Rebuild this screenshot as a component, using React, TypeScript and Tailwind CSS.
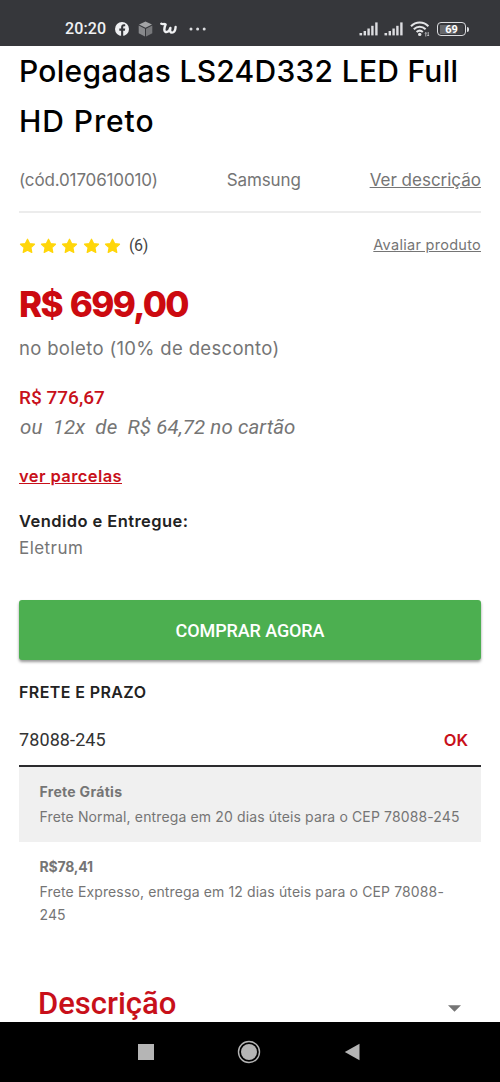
import React from 'react';

const shippingOptions = [
  {
    id: 'gratis',
    price: 'Frete Grátis',
    text: 'Frete Normal, entrega em 20 dias úteis para o CEP 78088-245',
    row: 'h-[75px] bg-[#f0f0f0]',
    priceClass: 'tracking-[0.3px]',
  },
  {
    id: 'expresso',
    price: 'R$78,41',
    text: 'Frete Expresso, entrega em 12 dias úteis para o CEP 78088-245',
    row: 'h-[98px]',
    priceClass: 'tracking-[-0.2px]',
  },
];

const SignalIcon = () => (
  <svg width="20" height="14" viewBox="0 0 20 14" fill="#dcdde0">
    <rect x="0.5" y="11" width="2.6" height="2.4" />
    <rect x="4.6" y="9" width="2.4" height="4.4" />
    <rect x="8.4" y="6.5" width="2.4" height="6.9" />
    <rect x="12.2" y="3.8" width="2.4" height="9.6" />
    <rect x="16.2" y="0.4" width="2.4" height="13" />
  </svg>
);

const StatusBar = () => (
  <header className="flex h-[46px] items-start justify-between bg-[#36373b] pt-[19px] pr-[31px] pl-[65px]">
    <div className="flex h-5 items-center">
      <span className="w-[41px] whitespace-nowrap font-[Roboto] text-[16px] leading-5 font-medium tracking-[0.15px] text-[#f0f1f3]">
        20:20
      </span>
      <svg className="ml-[9px]" width="14" height="14" viewBox="0 0 14 14">
        <circle cx="7" cy="7" r="7" fill="#eeeff1" />
        <path
          d="M6.1 14V8.7H4.3V6.6h1.8V5.3c0-2 1.1-3 2.8-3 .5 0 1 .1 1.3.1v1.8h-.9c-.9 0-1.1.5-1.1 1.1v1.3h2l-.3 2.1H8.2V14z"
          fill="#36373b"
        />
      </svg>
      <svg className="ml-[9px]" width="15" height="16" viewBox="0 0 15 16">
        <path d="M7.5.5 14 3.6 7.5 6.8 1 3.6z" fill="#a3a4a6" />
        <path d="M.7 4.6 7 7.7v7.8L.7 12.2z" fill="#88898c" />
        <path d="M14.3 4.6 8 7.7v7.8l6.3-3.3z" fill="#77787b" />
      </svg>
      {/* Wish */}
      <svg className="ml-[7px]" width="17" height="14" viewBox="0 0 17 14" fill="none">
        <path
          d="M1.3 1.7c1.2 1.1 2.8-.3 4.3.8-.9 2-1.4 3.900-1.2 5.600.3 3 4.700 2.600 6-2.200-.7 3.300-.1 4.700 1.600 4.700 2.300 0 3.400-2.600 3.600-5.600"
          stroke="#f0f1f3"
          strokeWidth="2.4"
          strokeLinecap="round"
          strokeLinejoin="round"
        />
      </svg>
      <svg className="ml-[12px]" width="18" height="4" viewBox="0 0 18 4" fill="#dcdde0">
        <circle cx="2" cy="2" r="1.5" />
        <circle cx="8.6" cy="2" r="1.5" />
        <circle cx="15.2" cy="2" r="1.5" />
      </svg>
    </div>
    <div className="flex h-5 items-center">
      <SignalIcon />
      <div className="ml-[5px] flex">
        <SignalIcon />
      </div>
      <svg className="ml-[6px]" width="21" height="16" viewBox="0 0 21 16" fill="none">
        <path
          d="M1 5.3c4.9-5 12.5-5 17.4 0M3.8 8.3c3.4-3.4 8.4-3.4 11.8 0M6.6 11.1c1.9-1.8 4.3-1.8 6.2 0"
          stroke="#e3e4e6"
          strokeWidth="2"
        />
        <circle cx="9.7" cy="13.4" r="1.7" fill="#e3e4e6" />
        <path d="M15.8 11.5v4M15 12.5l.8-1 .8 1M18.2 11v4M17.4 14l.8 1 .8-1" stroke="#c4c5c8" strokeWidth="0.9" />
      </svg>
      <div className="ml-[6px] flex h-[14px] w-[29px] items-center justify-center rounded-[4px] border-[1.5px] border-[#dcdde0]">
        <div className="flex h-[9px] w-[23px] items-center justify-center bg-linear-to-r from-[#66676a] from-70% to-[#404145] to-70%">
          <span className="font-[Roboto] text-[11px] leading-[9px] font-bold text-white">69</span>
        </div>
      </div>
      <div className="ml-px h-[5px] w-[2px] rounded-r-sm bg-[#dcdde0]" />
    </div>
  </header>
);

const Star = () => (
  <svg width="17" height="16" viewBox="0 0 17 16">
    <path
      d="m8.5 1.2 2.1 4.4 4.9.6-3.6 3.4.9 4.8-4.3-2.3-4.3 2.3.9-4.8L1.5 6.2l4.9-.6z"
      fill="#ffd60a"
      stroke="#ffd60a"
      strokeWidth="1.2"
      strokeLinejoin="round"
    />
  </svg>
);

const ProductInfo = () => (
  <section className="px-[19px]">
    <h1 className="h-[99px] pt-px text-[30px] leading-[49.5px] font-[450] whitespace-nowrap text-black">
      <span className="block tracking-[0.27px]">Polegadas LS24D332 LED Full</span>
      <span className="block tracking-[0.95px]">HD Preto</span>
    </h1>

    <div className="flex h-[68px] items-center justify-between border-b-2 border-[#ececec] pt-[5px] text-[17px] whitespace-nowrap text-[#757575]">
      <span className="tracking-[-0.15px]">(cód.0170610010)</span>
      <span className="tracking-[-0.1px]">Samsung</span>
      <a className="underline">Ver descrição</a>
    </div>

    <div className="flex h-[65px] items-center justify-between">
      <div className="flex items-center gap-[4.2px]">
        <Star />
        <Star />
        <Star />
        <Star />
        <Star />
        <span className="ml-1 font-[Roboto] text-[16px] tracking-[-0.3px] text-[#444]">(6)</span>
      </div>
      <a className="pb-[2px] text-[14.5px] tracking-[0.28px] text-[#757575] underline">Avaliar produto</a>
    </div>

    <p className="h-[52px] text-[35px] leading-[52px] font-extrabold tracking-[-1.7px] whitespace-nowrap text-[#cc0a10]">
      R$ <span className="ml-[2px]">699,00</span>
    </p>
    <p className="h-[36px] text-[18.5px] leading-[36px] tracking-[0.33px] whitespace-nowrap text-[#757575]">
      no boleto (10% de desconto)
    </p>

    <p className="mt-[18px] font-[Roboto] text-[19px] leading-[28px] font-medium text-[#c8101a]">R$ 776,67</p>
    <p className="pl-px font-[Roboto] text-[20.5px] leading-[30px] tracking-[0.08px] whitespace-pre text-[#757575] italic">
      {'ou  12x  de  R$ 64,72 no cartão'}
    </p>

    <p className="mt-5 text-[16.5px] leading-[28px] font-semibold tracking-[0.4px] text-[#c8101a]">
      <a className="underline">ver parcelas</a>
    </p>

    <p className="mt-[17px] text-[16.5px] leading-[28px] font-semibold tracking-[0.43px] text-[#222]">
      Vendido e Entregue:
    </p>
    <p className="text-[17px] leading-[26px] tracking-[0.45px] text-[#757575]">Eletrum</p>
  </section>
);

const Shipping = () => (
  <section className="px-[19px]">
    <h2 className="mt-5 text-[16px] leading-6 font-semibold tracking-[0.4px] text-[#222]">FRETE E PRAZO</h2>
    <div className="mt-[13px] flex h-[50px] items-center justify-between border-b-2 border-[#2b2b2e] pr-[13px] pb-[3px]">
      <span className="font-[Roboto] text-[18px] tracking-[0.1px] text-[#333]">78088-245</span>
      <button className="pt-[2px] text-[16.5px] font-semibold text-[#c8101a]">OK</button>
    </div>
    {shippingOptions.map((option) => (
      <div key={option.id} className={`pt-[12px] pr-[20px] pl-[20.5px] text-[14px] text-[#757575] ${option.row}`}>
        <p className={`h-[26px] leading-[26px] font-bold ${option.priceClass}`}>{option.price}</p>
        <p className="leading-[23px] tracking-[0.13px]">{option.text}</p>
      </div>
    ))}
  </section>
);

const NavigationBar = () => (
  <footer className="flex h-[60px] items-center justify-between bg-black pr-[140px] pl-[138px]">
    <div className="size-[16px] bg-[#b5b5b5]" />
    <svg width="24" height="24" viewBox="0 0 24 24">
      <circle cx="12" cy="12" r="10.5" fill="none" stroke="#b5b5b5" strokeWidth="1.4" />
      <circle cx="12" cy="12" r="8" fill="#b5b5b5" />
    </svg>
    <svg width="16" height="18" viewBox="0 0 16 18">
      <path d="M15.5.8v16.4L.8 9z" fill="#b5b5b5" />
    </svg>
  </footer>
);

export default function App() {
  return (
    <div className="flex h-[1082px] w-[500px] flex-col overflow-hidden bg-white font-[Inter,sans-serif]">
      <StatusBar />
      <main className="min-h-0 flex-1 overflow-hidden">
        <ProductInfo />
        <div className="px-[19px] pt-[39px]">
          <button className="h-[60px] w-full rounded-[3px] bg-[#4caf50] font-[Roboto] text-[18px] font-medium tracking-[-0.1px] text-white shadow-[0_2px_3px_rgba(0,0,0,0.4)]">
            COMPRAR AGORA
          </button>
        </div>
        <Shipping />
        <div className="mt-[45px] flex items-center justify-between pr-[39px] pl-[38px]">
          <h2 className="font-[Roboto] text-[31px] leading-[38px] font-medium text-[#c8101a]">Descrição</h2>
          <svg className="mt-[9px]" width="13" height="7" viewBox="0 0 13 7">
            <path d="M0 .3h13L6.5 6.7z" fill="#757575" />
          </svg>
        </div>
      </main>
      <NavigationBar />
    </div>
  );
}
